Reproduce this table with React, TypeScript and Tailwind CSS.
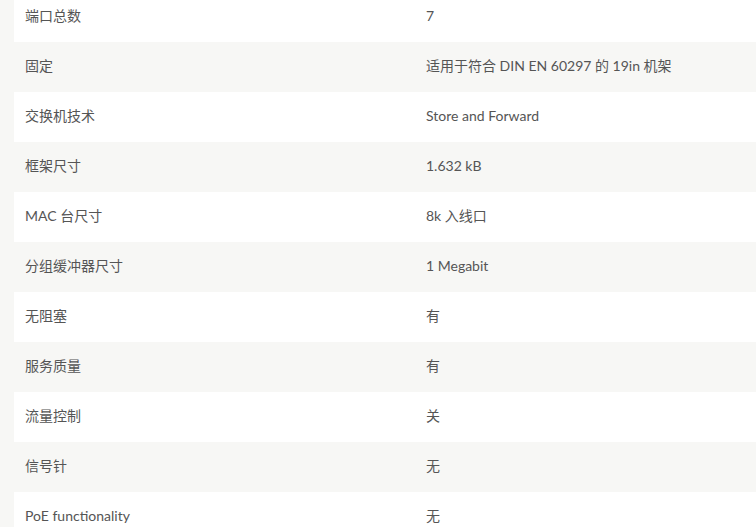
import React from "react";

const rows: [string, string][] = [
  ["端口总数", "7"],
  ["固定", "适用于符合 DIN EN 60297 的 19in 机架"],
  ["交换机技术", "Store and Forward"],
  ["框架尺寸", "1.632 kB"],
  ["MAC 台尺寸", "8k 入线口"],
  ["分组缓冲器尺寸", "1 Megabit"],
  ["无阻塞", "有"],
  ["服务质量", "有"],
  ["流量控制", "关"],
  ["信号针", "无"],
  ["PoE functionality", "无"],
];

export default function App() {
  return (
    <div
      className="w-[756px] h-[527px] overflow-hidden bg-[#f7f7f5] pl-[14px]"
      style={{ fontFamily: 'Lato, "Noto Sans CJK SC", sans-serif' }}
    >
      <div className="-mt-[8px] flex flex-col">
        {rows.map(([k, v], i) => (
          <div
            key={i}
            className={`flex h-[50px] items-center pb-[3px] text-[14px] text-[#555555] ${
              i % 2 === 0 ? "bg-white" : "bg-[#f7f7f5]"
            }`}
          >
            <div className="w-[412px] shrink-0 pl-[11px]">{k}</div>
            <div>{v}</div>
          </div>
        ))}
      </div>
    </div>
  );
}
